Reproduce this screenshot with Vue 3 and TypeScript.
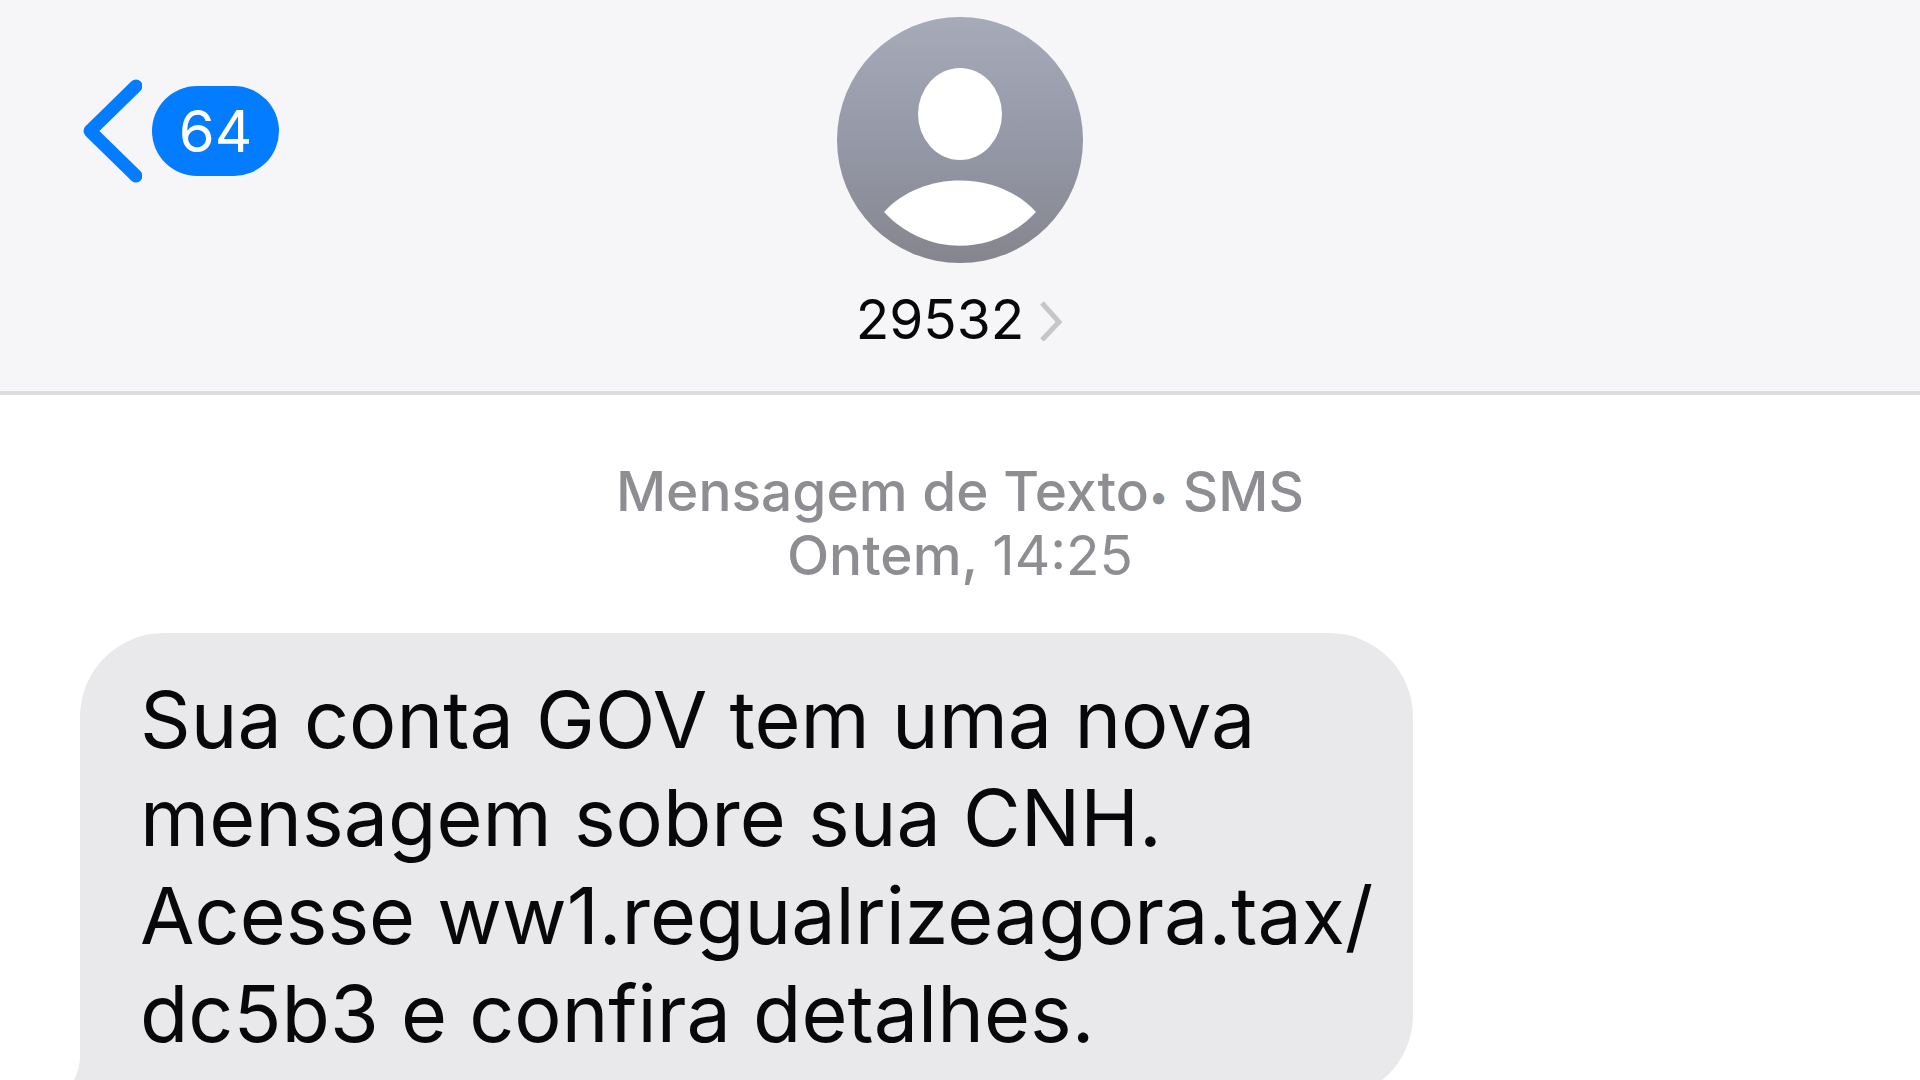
<script setup lang="ts">
interface Conversation {
  unread: number
  sender: string
  service: string
  channel: string
  day: string
  time: string
  lines: string[]
}

const conversation: Conversation = {
  unread: 64,
  sender: '29532',
  service: 'Mensagem de Texto',
  channel: 'SMS',
  day: 'Ontem,',
  time: '14:25',
  lines: [
    'Sua conta GOV tem uma nova',
    'mensagem sobre sua CNH.',
    'Acesse ww1.regualrizeagora.tax/',
    'dc5b3 e confira detalhes.',
  ],
}
</script>

<template>
  <div class="screen">
    <header class="topbar">
      <button class="back" type="button" aria-label="Voltar">
        <svg class="back-arrow" viewBox="0 0 62 104" aria-hidden="true">
          <path d="M56 7 L10 52 L56 97" />
        </svg>
        <span class="badge">{{ conversation.unread }}</span>
      </button>

      <button class="contact" type="button">
        <svg class="avatar" viewBox="0 0 246 246" aria-hidden="true">
          <defs>
            <linearGradient id="avatar-fill" x1="0" y1="0" x2="0" y2="1">
              <stop offset="0" stop-color="#a6abb9" />
              <stop offset="0.5" stop-color="#9599a7" />
              <stop offset="1" stop-color="#85858e" />
            </linearGradient>
          </defs>
          <circle cx="123" cy="123" r="123" fill="url(#avatar-fill)" />
          <ellipse cx="123" cy="97" rx="42" ry="46" fill="#fff" />
          <path d="M47 195 C85 153 161 153 199 195 C157 240 89 240 47 195 Z" fill="#fff" />
        </svg>
        <span class="name">
          {{ conversation.sender }}
          <svg class="name-arrow" viewBox="0 0 24 44" aria-hidden="true">
            <path d="M2 6 L19 25 L2 43" />
          </svg>
        </span>
      </button>
    </header>

    <main class="thread">
      <p class="meta">
        <span>{{ conversation.service }}<span class="dot">•</span> {{ conversation.channel }}</span>
        <span>{{ conversation.day }} <time class="time">{{ conversation.time }}</time></span>
      </p>
      <div class="bubble">
        <p class="message">
          <span v-for="line in conversation.lines" :key="line" class="line">{{ line }}</span>
        </p>
        <svg class="tail" viewBox="0 0 90 92" aria-hidden="true">
          <path d="M14 0 V50 C14 62 8 76 0 86 C20 92 44 88 60 80 L90 0 Z" />
        </svg>
      </div>
    </main>
  </div>
</template>

<style>
body {
  margin: 0;
  background: #fff;
}
</style>

<style scoped>
.screen {
  height: 100vh;
  overflow: hidden;
  background: #fff;
  color: #08080a;
  font-family: Inter, "Liberation Sans", sans-serif;
}

.topbar {
  display: grid;
  grid-template-columns: 1fr auto 1fr;
  align-items: start;
  padding: 17px 80px 40px;
  background: #f6f6f8;
  border-bottom: 4px solid #dcdcde;
}

button {
  padding: 0;
  border: 0;
  background: none;
  color: inherit;
  font: inherit;
  cursor: pointer;
}

.back {
  display: flex;
  align-items: center;
  justify-self: start;
  gap: 10px;
  margin-top: 62px;
}

.back-arrow {
  width: 62px;
  height: 104px;
}

.back-arrow path {
  fill: none;
  stroke: #047cff;
  stroke-width: 13;
  stroke-linecap: round;
  stroke-linejoin: round;
}

.badge {
  box-sizing: border-box;
  min-width: 127px;
  padding: 0 20px;
  border-radius: 45px;
  background: #047cff;
  color: #fff;
  font-size: 58px;
  line-height: 90px;
}

.contact {
  display: flex;
  flex-direction: column;
  align-items: center;
  gap: 24px;
}

.avatar {
  width: 246px;
  height: 246px;
}

.name {
  display: flex;
  align-items: center;
  gap: 16px;
  font-size: 55px;
  line-height: 64px;
}

.name-arrow {
  width: 24px;
  height: 44px;
}

.name-arrow path {
  fill: none;
  stroke: #c6c6c9;
  stroke-width: 5;
}

.thread {
  padding: 64px 80px;
}

.meta {
  display: flex;
  flex-direction: column;
  align-items: center;
  margin: 0 0 46px;
  color: #8e8e92;
  font-size: 55px;
  font-weight: 500;
  line-height: 64px;
}

.dot {
  font-size: 36px;
  line-height: 1;
  vertical-align: middle;
}

.time {
  font-weight: 400;
}

.bubble {
  position: relative;
  isolation: isolate;
  width: fit-content;
  border-radius: 84px;
  background: #e9e9eb;
}

.message {
  margin: 0;
  padding: 37px 40px 37px 60px;
  font-size: 79px;
  line-height: 98px;
}

.line {
  display: block;
}

.tail {
  position: absolute;
  z-index: -1;
  bottom: 0;
  left: -14px;
  width: 90px;
  height: 92px;
  fill: #e9e9eb;
}
</style>
